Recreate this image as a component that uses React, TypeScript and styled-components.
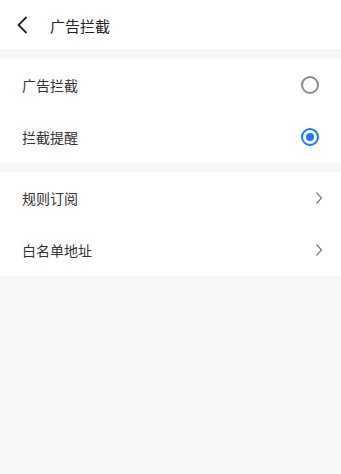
import styled, { createGlobalStyle } from 'styled-components';

const GlobalStyle = createGlobalStyle`
	html, body {
		margin: 0;
		padding: 0;
		background: #f7f7f7;
	}
	body {
		font-family: 'Noto Sans CJK SC', 'Noto Sans', sans-serif;
		color: #333333;
	}
`;

const Page = styled.div`
	min-height: 474px;
	background: #f7f7f7;
`;

const Header = styled.div`
	height: 51px;
	display: flex;
	align-items: center;
	background: #ffffff;
	border-bottom: 1px solid #ececec;
	box-sizing: border-box;
	padding-left: 16px;
	.title {
		margin-left: 20px;
		font-size: 15px;
		color: #222222;
	}
`;

const Section = styled.div<{ gap: number }>`
	background: #ffffff;
	margin-top: ${(p) => p.gap}px;
`;

const Row = styled.div`
	height: 52px;
	display: flex;
	align-items: center;
	justify-content: space-between;
	padding: 0 20px 0 22px;
	font-size: 14px;
	color: #333333;
`;

const Radio = styled.span<{ checked: boolean }>`
	width: 18px;
	height: 18px;
	box-sizing: border-box;
	border-radius: 50%;
	border: 2px solid ${(p) => (p.checked ? '#1a7cf5' : '#8a8a8a')};
	display: flex;
	align-items: center;
	justify-content: center;
	margin-right: 2px;
	&::after {
		content: '';
		display: ${(p) => (p.checked ? 'block' : 'none')};
		width: 8px;
		height: 8px;
		border-radius: 50%;
		background: #1a7cf5;
	}
`;

const Back = () => (
	<svg width='14' height='20' viewBox='0 0 14 20'>
		<path d='M10.5 2 L2.5 10 L10.5 18' fill='none' stroke='#222' strokeWidth='1.8' />
	</svg>
);

const Chevron = () => (
	<svg width='8' height='14' viewBox='0 0 8 14' style={{ marginRight: -2 }}>
		<path d='M1.5 1.5 L6.5 7 L1.5 12.5' fill='none' stroke='#777' strokeWidth='1.2' />
	</svg>
);

const App = () => {
	return (
		<Page>
			<GlobalStyle />
			<Header>
				<Back />
				<span className='title'>广告拦截</span>
			</Header>
			<Section gap={8}>
				<Row>
					<span>广告拦截</span>
					<Radio checked={false} />
				</Row>
				<Row>
					<span>拦截提醒</span>
					<Radio checked={true} />
				</Row>
			</Section>
			<Section gap={9}>
				<Row>
					<span>规则订阅</span>
					<Chevron />
				</Row>
				<Row>
					<span>白名单地址</span>
					<Chevron />
				</Row>
			</Section>
		</Page>
	);
};

export default App;
